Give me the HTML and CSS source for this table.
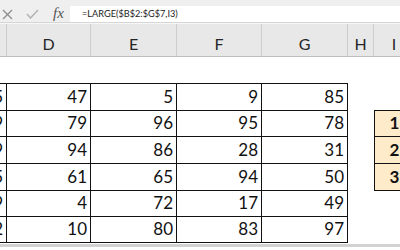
FILE: index.html
```html
<!DOCTYPE html>
<html>
<head>
<meta charset="utf-8">
<link rel="stylesheet" href="styles.css">
</head>
<body>
<div class="app">
  <div class="fbar">
    <div class="fbtns">
      <svg class="ico-x" width="11" height="11" viewBox="0 0 11 11"><path d="M1 1 L10 10 M10 1 L1 10" stroke="#8c8c8c" stroke-width="1.3" fill="none"/></svg>
      <svg class="ico-ok" width="13" height="10" viewBox="0 0 13 10"><path d="M1 5 L4.5 9 L12 1" stroke="#b4b4b4" stroke-width="1.5" fill="none"/></svg>
      <span class="fx">fx</span>
    </div>
    <div class="finput">=LARGE($B$2:$G$7,I3)</div>
  </div>
  <div class="colhead">
    <div class="ch c-c"></div>
    <div class="ch c-d">D</div>
    <div class="ch c-e">E</div>
    <div class="ch c-f">F</div>
    <div class="ch c-g">G</div>
    <div class="ch c-h">H</div>
    <div class="ch c-i">I</div>
  </div>
  <div class="grid">
    <div class="blank"></div>

    <div class="cell b top part">25</div><div class="cell b top">47</div><div class="cell b top">5</div><div class="cell b top">9</div><div class="cell b top">85</div><div class="cell"></div><div class="cell ibot"></div>
    <div class="cell b part">69</div><div class="cell b">79</div><div class="cell b">96</div><div class="cell b">95</div><div class="cell b">78</div><div class="cell"></div><div class="cell ic">1</div>
    <div class="cell b part">59</div><div class="cell b">94</div><div class="cell b">86</div><div class="cell b">28</div><div class="cell b">31</div><div class="cell"></div><div class="cell ic">2</div>
    <div class="cell b part">15</div><div class="cell b">61</div><div class="cell b">65</div><div class="cell b">94</div><div class="cell b">50</div><div class="cell"></div><div class="cell ic">3</div>
    <div class="cell b part">39</div><div class="cell b">4</div><div class="cell b">72</div><div class="cell b">17</div><div class="cell b">49</div><div class="cell"></div><div class="cell"></div>
    <div class="cell b part">32</div><div class="cell b">10</div><div class="cell b">80</div><div class="cell b">83</div><div class="cell b">97</div><div class="cell"></div><div class="cell"></div>
  </div>
  <div class="bottomline"></div>
</div>
</body>
</html>
```
FILE: styles.css
```css
html, body {
  margin: 0;
  padding: 0;
  background: #ffffff;
}
.app {
  width: 400px;
  height: 250px;
  overflow: hidden;
  display: flex;
  flex-direction: column;
  font-family: Lato, "Liberation Sans", sans-serif;
  color: #1a1a1a;
}
.fbar {
  height: 23px;
  flex: none;
  display: flex;
  align-items: flex-end;
  background: #efefef;
  border-bottom: 1px solid #d6d6d6;
  box-sizing: border-box;
}
.fbtns {
  width: 70px;
  height: 16px;
  flex: none;
  display: flex;
  align-items: center;
}
.ico-x { margin-left: 2px; }
.ico-ok { margin-left: 13px; }
.fx {
  margin-left: 14px;
  font-family: "Liberation Serif", serif;
  font-style: italic;
  font-size: 15px;
  color: #555555;
  line-height: 16px;
  margin-top: -3px;
}
.finput {
  flex: 1;
  height: 16px;
  background: #ffffff;
  font-size: 9.2px;
  line-height: 16px;
  padding-left: 12px;
  color: #222222;
  white-space: nowrap;
}
.colhead {
  height: 34px;
  flex: none;
  display: flex;
  background: #e8e8e8;
  border-top: 1px solid #f7f7f7;
  border-bottom: 1px solid #bdbdbd;
  box-sizing: border-box;
}
.ch {
  box-sizing: border-box;
  border-right: 1px solid #cdcdcd;
  display: flex;
  align-items: center;
  justify-content: center;
  font-size: 16px;
  color: #262626;
  padding-top: 6px;
  flex: none;
}
.c-c { width: 7px; }
.c-d { width: 84px; }
.c-e { width: 86px; }
.c-f { width: 85px; }
.c-g { width: 86px; }
.c-h { width: 26px; }
.c-i { width: 40px; border-right: none; }
.grid {
  display: grid;
  grid-template-columns: 7px 84px 86px 85px 86px 26px 50px;
  grid-template-rows: 26px 28px 26px 27px 27px 26px 26px;
  flex: none;
}
.blank {
  grid-column: 1 / -1;
}
.cell {
  box-sizing: border-box;
  display: flex;
  align-items: flex-end;
  justify-content: flex-end;
  font-size: 17px;
  line-height: 20px;
  padding: 0 3px 3px 0;
  white-space: nowrap;
  overflow: hidden;
  color: #111111;
}
.b {
  border-right: 1px solid #111111;
  border-bottom: 1px solid #111111;
}
.top {
  border-top: 1px solid #111111;
}
.ibot {
  border-bottom: 1px solid #111111;
}
.ic {
  background: #fdebc9;
  border-left: 1px solid #111111;
  border-bottom: 1px solid #111111;
  justify-content: center;
  font-weight: bold;
  padding: 0 10px 3px 0;
}
.bottomline {
  height: 3px;
  margin-top: 1px;
  background: #d2d2d2;
  flex: none;
}
```
